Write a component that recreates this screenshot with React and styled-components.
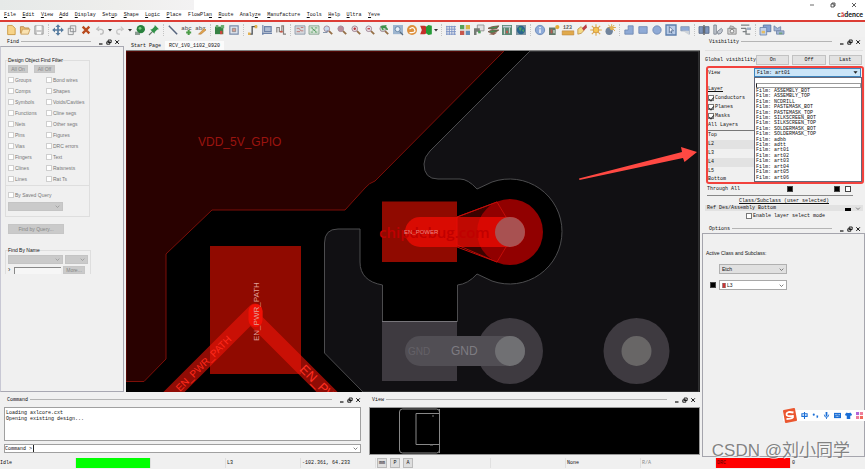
import React, { useState } from 'react';
import styled, { createGlobalStyle } from 'styled-components';

const GlobalStyle = createGlobalStyle`
    * {
        box-sizing: border-box;
    }

    body {
        margin: 0;
        background-color: #f0f0f0;
    }

    button, input, select, textarea {
        font: inherit;
        color: inherit;
        margin: 0;
        padding: 0;
    }
`;

const mono = '"Liberation Mono", monospace';
const sans = '"Liberation Sans", sans-serif';

const Page = styled.div`
    position: relative;
    display: flex;
    flex-direction: column;
    min-height: 100vh;
    background-color: #f0f0f0;
    color: #111;
    font-family: ${mono};
    font-size: 5px;
    line-height: 6px;
    overflow: hidden;
`;

/* ---------- header ---------- */

const Header = styled.header`
    display: grid;
    grid-template-columns: 1fr auto;
    grid-template-rows: 10px 10px;
    background-color: #fff;
    border-bottom: 2px solid #dc3d35;
`;

const TitleStrip = styled.div`
    width: 24%;
    background: linear-gradient(90deg, #e6e9e8, #eeeeec 60%, #f3f2f3);
`;

const WindowButtons = styled.div`
    display: flex;
    justify-content: flex-end;
    gap: 15px;
    padding-right: 8px;

    button {
        display: flex;
        align-items: center;
        border: none;
        background: none;
    }

    svg {
        width: 6px;
        height: 6px;
    }
`;

const Menu = styled.nav`
    display: flex;
    align-items: center;
    justify-content: space-between;
    width: 47%;
    padding-left: 4px;

    button {
        border: none;
        background: none;
    }

    u {
        text-decoration-thickness: 1px;
    }
`;

const Brand = styled.div`
    padding-right: 2px;
    font-family: Lato, sans-serif;
    font-size: 7px;
    font-weight: 700;
    line-height: 9px;
    text-align: right;

    span {
        color: #c33;
    }
`;

const Toolbar = styled.div`
    display: flex;
    align-items: center;
    height: 15px;
    padding-left: 2px;
    background-color: #f1f1f1;
`;

const ToolGroup = styled.div`
    display: flex;
    align-items: center;
    padding-left: 2px;

    & + & {
        margin-left: 2px;
        border-left: 1px dotted #c4c4c4;
    }
`;

const Tool = styled.button`
    display: flex;
    align-items: center;
    justify-content: center;
    width: ${props => (props.$narrow ? '6px' : '14px')};
    height: 12px;
    border: none;
    background: none;

    svg {
        width: ${props => (props.$narrow ? '4px' : '10px')};
        height: 10px;
        overflow: visible;
    }
`;

/* ---------- layout ---------- */

const Workspace = styled.main`
    display: grid;
    grid-template-columns: minmax(0, 1fr) 163px;
    column-gap: 2px;
    flex: 1;
`;

const Center = styled.div`
    display: flex;
    flex-direction: column;
`;

const UpperRow = styled.div`
    display: grid;
    grid-template-columns: 124px minmax(0, 1fr);
    column-gap: 2px;
    flex: 1;
`;

const LowerRow = styled.div`
    display: grid;
    grid-template-columns: 365fr 335fr;
    height: 65px;
`;

const Column = styled.section`
    display: flex;
    flex-direction: column;
    flex: ${props => (props.$grow ? '1' : 'none')};
    min-width: 0;
`;

const TitleBar = styled.div`
    display: flex;
    align-items: center;
    gap: 2px;
    height: ${props => (props.$tall ? '15px' : '9px')};
    padding: 0 4px 0 7px;

    h2 {
        margin: 0;
        font-size: 5px;
        font-weight: 400;
    }

    hr {
        flex: 1;
        height: 1px;
        margin: 0 5px 0 0;
        border: none;
        background-color: #b4b4b4;
    }

    button {
        display: flex;
        border: none;
        background: none;
    }

    svg {
        width: 6px;
        height: 6px;
    }
`;

const FindBody = styled.div`
    flex: 1;
    padding: 10px 0 0 4px;
    border: 1px solid #a8a8b2;
    border-left-color: #c8c8d4;
    font-family: ${sans};
    color: #777;
`;

const FilterBox = styled.fieldset`
    width: 85px;
    margin: 0;
    padding: ${props => (props.$open ? '0' : '0 0 5px')};
    border: 1px solid #dedede;
    border-bottom-width: ${props => (props.$open ? '0' : '1px')};

    legend {
        padding: 0;
        margin-left: 2px;
        color: #111;
    }
`;

const Row = styled.div`
    display: flex;
    align-items: center;
    gap: ${props => props.$gap || '2px'};
    padding: ${props => props.$pad || '0 2px'};
`;

const FlatButton = styled.button`
    height: ${props => (props.$large ? '10px' : '8px')};
    width: ${props => props.$width};
    border: 1px solid #c6c6c6;
    background-color: #cacaca;
    color: #858585;
    line-height: 6px;
`;

const FilterGrid = styled.div`
    display: grid;
    grid-template-columns: 38px 1fr;
    grid-auto-rows: 11px;
    align-items: center;
    padding-left: 2px;
`;

const CheckLabel = styled.label`
    display: flex;
    align-items: center;
    gap: 1px;
    white-space: nowrap;

    input {
        display: grid;
        place-items: center;
        appearance: none;
        width: 6px;
        height: 6px;
        border: 1px solid ${props => (props.$dark ? '#777' : '#cfcfcf')};
        background-color: #fff;
    }

    input:checked::after {
        content: '';
        width: 2px;
        height: 4px;
        border: solid #333;
        border-width: 0 1px 1px 0;
        transform: rotate(40deg);
    }
`;

const Divider = styled.hr`
    margin: ${props => props.$margin || '0'};
    border: none;
    border-top: 1px solid ${props => props.$color || '#dedede'};
`;

const Combo = styled.span`
    display: flex;
    align-items: center;
    width: ${props => props.$width};
    height: ${props => props.$height || '9px'};
    padding: 0 2px;
    border: 1px solid ${props => props.$border || '#c4c4c4'};
    background-color: ${props => props.$fill || '#cacaca'};

    select {
        appearance: none;
        flex: 1;
        min-width: 0;
        height: 6px;
        border: none;
        outline: none;
        background: none;
        line-height: 6px;
    }

    svg {
        flex: none;
        width: 5px;
        height: 5px;
    }
`;

const NameRow = styled.label`
    display: flex;
    align-items: center;
    gap: 2px;
    padding: 0 2px;
    color: #333;

    span {
        width: 4px;
        font-size: 7px;
    }

    input {
        width: 47px;
        height: 7px;
        border: 1px solid #888;
        border-width: 1px 0 0 1px;
        background-color: #f6f6f6;
    }
`;

const Tabs = styled.div`
    display: flex;
    align-items: flex-end;
    height: 14px;
    padding-left: 1px;
    border-bottom: 1px solid #808080;

    button {
        height: 9px;
        padding: 0 4px;
        border: none;
        background: none;
    }

    button[aria-selected='true'] {
        background-color: #fbfbfb;
    }
`;

const Board = styled.svg`
    display: block;
    flex: 1;
    width: 100%;
    min-height: 0;
    background-color: #000;
    font-family: ${sans};
`;

const CommandLog = styled.textarea`
    display: block;
    flex: 1;
    margin: 0 4px 3px;
    padding: 2px 1px;
    border: 1px solid #a0a0a0;
    background-color: #fff;
    resize: none;
    outline: none;
    line-height: 6px;
`;

const Prompt = styled.div`
    display: flex;
    align-items: center;
    height: 9px;
    margin: 0 4px 4px;
    padding-right: 2px;
    border: 1px solid #a0a0a0;
    background-color: #fff;

    input {
        flex: 1;
        height: 7px;
        margin-left: 1px;
        border: none;
        border-left: 1px solid #222;
        outline: none;
    }

    svg {
        width: 5px;
        height: 5px;
    }
`;

const Overview = styled.div`
    flex: 1;
    display: flex;
    margin: 0 0 2px 4px;
    border: 1px solid #999;
    background-color: #000;

    svg {
        width: 84px;
        height: 46px;
    }
`;

/* ---------- visibility ---------- */

const VisibilityBody = styled.div`
    display: flex;
    flex-direction: column;
    padding: 4px 2px 3px 3px;
`;

const GlobalRow = styled.div`
    display: grid;
    grid-template-columns: 48px repeat(3, 1fr);
    column-gap: 3px;
    align-items: center;
    height: 10px;
    margin-right: 1px;
    white-space: nowrap;

    button {
        height: 10px;
        border: 1px solid #c2c2c2;
        background-color: #e2e2e2;
    }
`;

const Highlight = styled.div`
    display: flex;
    flex-direction: column;
    height: 118px;
    margin: 1px -1px 0 1px;
    border: 2px solid #f2423d;
    border-radius: 3px;
`;

const ViewRow = styled.div`
    position: relative;
    display: grid;
    grid-template-columns: 46px 1fr;
    align-items: center;
    padding: 0 1px 0 0;
`;

const FilmList = styled.ul`
    position: absolute;
    top: 9px;
    left: 46px;
    right: 0;
    display: flex;
    flex-direction: column;
    height: 105px;
    margin: 0;
    padding: 0 0 0 1px;
    border: 1px solid #667;
    background-color: #fff;
    list-style: none;

    li {
        flex: 1;
        line-height: 5px;
        white-space: pre;
    }

    li:first-child {
        flex: none;
        height: 5px;
    }

    li:nth-child(2) {
        flex: none;
        height: 5px;
        margin-bottom: 1px;
        border: 1px solid #999;
        border-left-color: #222;
    }
`;

const LayerFilters = styled.div`
    display: flex;
    flex-direction: column;
    gap: 3px;
    padding-top: 9px;

    label {
        height: 6px;
    }
`;

const LayerTable = styled.table`
    width: 100%;
    margin-top: 2px;
    border-collapse: collapse;
    border-top: 1px solid #777;

    th {
        height: 9px;
        padding: 0;
        font-weight: 400;
        text-align: left;
    }

    tr:nth-child(even) {
        background-color: #e2e2e2;
    }
`;

const BottomLayers = styled.div`
    display: grid;
    grid-template-columns: ${props => (props.$inset ? '81px' : '80px')} repeat(3, 12px) 11px 11px 6px;
    align-items: center;
    height: ${props => props.$height};
    padding-left: ${props => (props.$inset ? '0' : '2px')};
`;

const Swatch = styled.input`
    appearance: none;
    width: 6px;
    height: ${props => (props.$short ? '3px' : '6px')};
    align-self: ${props => (props.$short ? 'end' : 'center')};
    border: 1px solid #444;
    background-color: ${props => props.$fill || '#000'};
`;

const ClassTitle = styled.div`
    text-align: center;
    text-decoration: underline;
    line-height: 8px;
`;

const ClippedRow = styled.div`
    display: flex;
    align-items: center;
    gap: 4px;
    height: 6px;
    padding: 0 2px;
    background-color: #e2e2e2;

    span {
        flex: 1;
    }

    svg {
        width: 6px;
        height: 5px;
    }
`;

const OptionsBody = styled.div`
    flex: 1;
    padding: 16px 3px;
    border: 1px solid #a5a5ad;
    font-family: ${sans};
`;

const OptionRow = styled.div`
    display: grid;
    grid-template-columns: 7px 68px;
    align-items: center;
    column-gap: 2px;
    margin-top: ${props => props.$top};
    padding-left: 4px;

    ${Combo} {
        grid-column: 2;
    }
`;

/* ---------- status bar and overlays ---------- */

const StatusBar = styled.footer`
    display: grid;
    grid-template-columns: 75fr 75fr 75fr 75fr 75fr 115fr 75fr 75fr 75fr 75fr 75fr;
    height: 12px;
    padding: 1px 0;
`;

const Cell = styled.div`
    display: flex;
    align-items: center;
    gap: 3px;
    padding-left: 1px;
    border-left: 1px solid #e0e0e0;
    background-color: ${props => props.$fill || 'transparent'};
    color: ${props => props.$color || '#111'};

    &:first-child {
        padding-left: 0;
        border-left: none;
    }

    button {
        width: 10px;
        height: 10px;
        border: 1px solid #bbb;
        background-color: #dedede;
    }
`;

const Ime = styled.div`
    position: absolute;
    right: 0;
    bottom: 48px;
    display: flex;
    align-items: center;
    gap: 4px;
    height: 11px;
    padding-right: 2px;
    background-color: #fff;

    svg {
        width: 7px;
        height: 7px;
    }

    svg:first-child {
        width: 15px;
        height: 15px;
        margin-left: -1px;
    }
`;

const Watermark = styled.div`
    position: absolute;
    right: 15px;
    bottom: 7px;
    color: rgba(110, 110, 110, 0.85);
    font-family: "Liberation Sans", "Noto Sans CJK SC", sans-serif;
    font-size: 17px;
    line-height: 22px;
    text-shadow: 1px 1px 0 rgba(255, 255, 255, 0.6);
    white-space: nowrap;
`;

/* ---------- small drawings ---------- */

const Chevron = ({ color = '#666' }) => (
    <svg viewBox="0 0 6 6"><path d="M.8 2 3 4.2 5.2 2" fill="none" stroke={color} /></svg>
);

const Caret = () => (
    <svg viewBox="0 0 4 10"><path d="M0 4h4L2 6.4z" fill="#333" /></svg>
);

const magnifier = (lens, mark) => (
    <>
        <path d="M7 7l4 4" stroke="#967047" strokeWidth="2.2" />
        <circle cx="4.5" cy="4.5" r="3.4" fill={lens} stroke="#a58d9c" strokeWidth="1.2" />
        {mark}
    </>
);

const icons = {
    new: <path d="M2 .5h5.5L11 4v7.5H2z" fill="#f7d388" stroke="#c59137" />,
    open: <><path d="M.5 10V2h4l1 1.5h5V5" fill="#e9bd71" stroke="#bb8744" /><path d="M1 11l2-6h9l-2 6z" fill="#fae2b1" stroke="#c59a58" /></>,
    save: <><path d="M1 1h10v10H1z" fill="#ccc" stroke="#929292" /><path d="M3 1h6v5H3zM3.5 8.5h5V11h-5z" fill="#f8f8f8" /></>,
    move: <><path d="M6 1v10M1 6h10" stroke="#557b9f" strokeWidth="2" /><path d="M6-1l3 3.4H3zM6 13l3-3.4H3zM-1 6l3.4-3v6zM13 6L9.6 3v6z" fill="#557b9f" /></>,
    copy: <path d="M4 1h6.5v7H4zM1.5 4h6v7.5h-6z" fill="#eee" stroke="#85888c" />,
    remove: <path d="M2 2l8 8M10 2l-8 8" stroke="#b94b1f" strokeWidth="2.8" />,
    undo: <><path d="M5 2L2 5l3 2" fill="none" stroke="#bdbdbd" strokeWidth="1.4" /><path d="M3 5h2q5 0 5 3t-4 3" fill="none" stroke="#bdbdbd" strokeWidth="1.6" /></>,
    redo: <><path d="M7 2l3 3-3 2" fill="none" stroke="#c8c8c8" strokeWidth="1.4" /><path d="M9 5H7Q2 5 2 8t4 3" fill="none" stroke="#c8c8c8" strokeWidth="1.6" /></>,
    ball: <><path d="M0 8h6v4H0z" fill="#8a9a91" /><circle cx="7" cy="5" r="5" fill="#29813d" /><circle cx="6" cy="4" r="1.7" fill="#7ccc83" /></>,
    pin: <><path d="M0 12l5-5" stroke="#68786c" strokeWidth="1.4" /><path d="M7 0l5 5-2 .5-3 3-.5 2L1.5 5.5l2-.5 3-3z" fill="#329249" /></>,
    line: <path d="M1 1l10 10" stroke="#56647d" strokeWidth="1.8" />,
    text: <><text x="-1" y="6" fontSize="7" fill="#444">abc</text><path d="M8 6v6M5 9h6" stroke="#4b9c47" strokeWidth="2.4" /></>,
    textEdit: <><text x="-1" y="6" fontSize="7" fill="#444">abc</text><path d="M3 11l7-7 2 2-6 5z" fill="#e2a44d" stroke="#a66e30" strokeWidth=".6" /></>,
    place: <><path d="M0 2h10v9H0z" fill="#378245" /><path d="M7 0h4v4H7zM1 0h3v3H1z" fill="#69ad70" /><path d="M6 7h3v4H6z" fill="#c9463c" /></>,
    chip: <><path d="M1 1h10v10H1z" fill="#dfe5ee" stroke="#7a8ca9" strokeWidth="1.4" /><path d="M4 4h4v4H4z" fill="#dd9f91" stroke="#888" /></>,
    route: <><path d="M1 11h4V2h6" fill="none" stroke="#4e5358" strokeWidth="1.6" /><path d="M8 0h3v4H8zM0 9h3v3H0z" fill="#e2b04e" /></>,
    slide: <><path d="M1 0v12M0 10h12M3 2h8v6H3z" fill="#afbdd2" stroke="#6f84a9" strokeWidth="1.4" /></>,
    delay: <><path d="M1 9V3h3v5h3V1h2v10h3" fill="none" stroke="#85807d" strokeWidth="1.4" /><path d="M5 8h3" stroke="#cc5747" strokeWidth="2" /></>,
    grid1: <><path d="M0 1h12v10H0z" fill="#d4d8dd" stroke="#8896a6" /><path d="M2 4h3l2 3h3M2 8h4M7 3h3" fill="none" stroke="#bb6c66" /></>,
    grid2: <><path d="M0 1h12v10H0z" fill="#dce7dc" stroke="#7d9a87" /><path d="M2 3.500h3M7 3.500h3M4 6h4M2 8.500h3M7 8.500h3M4 4l4 4" stroke="#499557" /></>,
    zoomFit: magnifier('#c6d8ed', <path d="M0 9h5V6" fill="none" stroke="#7387a0" />),
    zoomWin: magnifier('#b98e9b', null),
    zoomIn: magnifier('#ecd7dc', <path d="M4.5 3v3M3 4.5h3" stroke="#b42d35" strokeWidth="1.4" />),
    zoomOut: magnifier('#ebdfe4', <path d="M3 4.5h3" stroke="#b42d35" strokeWidth="1.4" />),
    zoomPrev: magnifier('#c9d7c9', <path d="M9 1L3 2l2 4M4 3q5-1 6 3" fill="none" stroke="#3d9149" strokeWidth="1.8" />),
    zoomSel: <><path d="M0 0h12v11H0z" fill="#9db5cf" /><circle cx="5.5" cy="5" r="3" fill="#e4edf6" stroke="#5a7da0" /><path d="M8 8l4 4" stroke="#5a6d80" strokeWidth="1.5" /></>,
    refresh: <><circle cx="6" cy="6" r="6" fill="#dd903d" /><path d="M3 5q4-4 6 0t-3 4M6 9H3" fill="none" stroke="#fff" strokeWidth="1.5" /></>,
    flip: <><path d="M-1 1h5q3 0 3 5t-3 5h-5l2-5z" fill="#c5302b" /><path d="M6 2l3-2 4 1v10l-4 1-3-2z" fill="#259a37" /></>,
    grid: <path d="M0 2h12M0 5h12M0 8h12M0 11h12M1 1v11M4 1v11M7 1v11M10 1v11" stroke="#7891c4" strokeWidth="1.1" />,
    colors: <><path d="M0 0h12v12H0z" fill="#ddd" /><path d="M0 0h5v5H0z" fill="#55a15a" /><path d="M7 0h5v5H7z" fill="#d8b644" /><path d="M0 7h5v5H0z" fill="#c7574c" /><path d="M7 7h5v5H7z" fill="#628db9" /></>,
    shadow: <><path d="M4 0h8v7H4z" fill="#e0e0e0" stroke="#8c8c8c" /><path d="M0 4h7v4H3v4H0z" fill="#767c76" /><path d="M5 7h3v3H5z" fill="#4b9d56" /></>,
    layers: <><path d="M0 4l5-2 8-1-2 3-6 1zM0 8l5-2 8 0-3 2-5 2z" fill="#4a8b55" stroke="#774b3f" /><path d="M1 11l5-2 5 0-4 3z" fill="#8d6252" /></>,
    board: <><path d="M0 0h12v12H0z" fill="#5d8a77" /><path d="M1 1h10v2H1z" fill="#c3d0db" /><path d="M3 4v7M9 3v7" stroke="#c9d0c6" strokeWidth="1.3" /><path d="M5 7h2v3H5z" fill="#cc5247" /></>,
    world: <><path d="M0 0h12v12H0z" fill="#8195a2" /><circle cx="6" cy="6" r="5" fill="#2b668f" /><path d="M3 3h4l-2 5zM7 6l3-1-1 4z" fill="#4da464" /></>,
    info: <><circle cx="6" cy="6" r="5.6" fill="#8eabd9" stroke="#6885b5" /><path d="M6 5v4.5M6 2.3V4" stroke="#fff" strokeWidth="1.6" /></>,
    key: <><path d="M0 3h8v9H0z" fill="#627869" /><path d="M2 5h2v5H2z" fill="#ba5b50" /><path d="M5 6h2v4H5z" fill="#b5c8b8" /><circle cx="10" cy="2.5" r="2.5" fill="#e3aa35" /></>,
    ruler: <><text x="0" y="5" fontSize="6" fontWeight="700" fill="#555">123</text><path d="M-1 7h14v5H-1z" fill="#e0a94c" stroke="#b67c33" strokeWidth=".6" /></>,
    brush: <><path d="M1 5l4-3 4 4-4 4-4 1z" fill="#f4d986" stroke="#bd9348" /><path d="M6 4l5-5 1 4-4 4z" fill="#bb3e45" /></>,
    sun: <><path d="M6-1v14M-1 6h14M1 1l10 10M11 1L1 11" stroke="#dca849" strokeWidth="1.3" /><circle cx="6" cy="6" r="3.4" fill="#f5c553" stroke="#cf913e" /></>,
    shade: <><path d="M8-1v9M3 3h10M4 0l8 7M11 0L5 7" stroke="#dca849" strokeWidth="1.2" /><circle cx="5" cy="7.5" r="4.4" fill="#71849c" /><circle cx="8" cy="4" r="2.2" fill="#e5b452" /></>,
    poly: <path d="M5 1h6v10H1V6h4z" fill="#8faad6" stroke="#6e87b1" />,
    rect: <path d="M1 2h10v8H1z" fill="#8faad6" stroke="#6e87b1" />,
    circle: <circle cx="6" cy="6" r="5" fill="#8faad6" stroke="#6e87b1" />,
    select: <><path d="M0 0h12v12H0z" fill="#b8cbe7" stroke="#5c7eac" strokeWidth="1.6" /><path d="M4 2l5 5H6l1 3-2-2-1 1z" fill="#f9faff" stroke="#344f76" strokeWidth=".8" /></>,
    cut: <><path d="M1 2h10v9L7 7H1z" fill="#8faad6" stroke="#8395b1" /><path d="M3 7l8 5V7z" fill="#cfd4da" /></>,
    mirror: <><path d="M0 2h5v8H0zM7 2h5v8H7z" fill="#7e95bb" stroke="#546685" /><path d="M6 0v12" stroke="#444" strokeWidth="1.4" /></>,
    probe: <path d="M1 0h3v11H1zM5 8l5-4q2 1 1 4T6 11z" fill="#c2c7d0" stroke="#777f8c" />,
    camera: <><path d="M1 4h10v7H1zM4 1l4 1 1 2H3z" fill="#d2d2d2" stroke="#888" /><circle cx="6" cy="7.4" r="2.2" fill="#f0f0f0" stroke="#777" /></>,
    net: <><path d="M0 0h10M0 4h6M2 8h5M6 4v7h5" fill="none" stroke="#7c8183" strokeWidth="1.5" /><path d="M7 3h5v3H7z" fill="#a1b1c6" /></>,
    stack: <><path d="M4 0h9v8H4z" fill="#84a0d2" stroke="#59739f" /><path d="M0 3h8v9H0z" fill="#c2d1e9" stroke="#6b84ad" /><path d="M2 7h4v3H2z" fill="#e5bd63" /></>,
    clip: <><path d="M0 1l4 3 4-2v5H0z" fill="#a2b6d5" stroke="#7186aa" /><path d="M3 7h9v4H3z" fill="#a2b6d5" stroke="#7186aa" /><path d="M6 9h4v2H6z" fill="#72a37a" /></>,
};

const toolGroups = [
    ['new', 'open', 'save'],
    ['move', 'copy', 'remove', 'undo', 'caret', 'redo', 'caret', 'ball', 'pin'],
    ['line', 'text', 'textEdit'],
    ['place', 'chip'],
    ['route', 'slide', 'delay'],
    ['grid1', 'grid2', 'zoomFit', 'zoomWin', 'zoomIn', 'zoomOut', 'zoomPrev', 'zoomSel', 'refresh', 'flip', 'caret'],
    ['grid', 'colors', 'shadow', 'layers', 'board', 'world'],
    ['info', 'key', 'ruler', 'brush', 'sun', 'shade'],
    ['poly', 'rect', 'circle', 'select', 'cut'],
    ['mirror', 'probe', 'camera', 'net'],
    ['stack', 'clip'],
];

// [label, index of the underlined letter]
const menus = [
    ['File', 0], ['Edit', 0], ['View', 0], ['Add', 0], ['Display', 0], ['Setup', 3],
    ['Shape', 0], ['Logic', 0], ['Place', 0], ['FlowPlan', 7], ['Route', 0], ['Analyze', 5],
    ['Manufacture', 0], ['Tools', 0], ['Help', 0], ['Ultra', 0], ['Yeve', 0],
];

const filters = [
    'Groups', 'Bond wires', 'Comps', 'Shapes', 'Symbols', 'Voids/Cavities', 'Functions', 'Cline segs',
    'Nets', 'Other segs', 'Pins', 'Figures', 'Vias', 'DRC errors', 'Fingers', 'Text',
    'Clines', 'Ratsnests', 'Lines', 'Rat Ts',
];

const films = [
    'ASSEMBLY_BOT', 'ASSEMBLY_TOP', 'NCDRILL', 'PASTEMASK_BOT', 'PASTEMASK_TOP', 'SILKSCREEN_BOT',
    'SILKSCREEN_TOP', 'SOLDERMASK_BOT', 'SOLDERMASK_TOP', 'adbb', 'adtt', 'art01', 'art02', 'art03',
    'art04', 'art05', 'art06',
];

function PanelTitle({ title, tall }) {
    return (
        <TitleBar $tall={tall}>
            <h2>{title}</h2>
            <hr />
            <button aria-label="Minimize"><svg viewBox="0 0 6 6"><path d="M1 5h3.5" stroke="#111" strokeWidth="1.2" /></svg></button>
            <button aria-label="Float"><svg viewBox="0 0 6 6"><path d="M2.2 1h3v2.5h-3zM.8 2.8h3v2.4h-3z" fill="#eee" stroke="#111" strokeWidth=".9" /></svg></button>
            <button aria-label="Close"><svg viewBox="0 0 6 6"><path d="M1.3 1.3l3.6 3.6M4.9 1.3L1.3 4.9" stroke="#111" /></svg></button>
        </TitleBar>
    );
}

function FindPanel() {
    return (
        <Column>
            <PanelTitle title="Find" />
            <FindBody>
                <FilterBox>
                    <legend>Design Object Find Filter</legend>
                    <Row $gap="6px" $pad="2px 2px 1px">
                        <FlatButton $width="20px">All On</FlatButton>
                        <FlatButton $width="21px">All Off</FlatButton>
                    </Row>
                    <FilterGrid>
                        {filters.map(name => (
                            <CheckLabel key={name}><input type="checkbox" />{name}</CheckLabel>
                        ))}
                    </FilterGrid>
                    <Divider $margin="1px 0 6px" />
                    <Row><CheckLabel><input type="checkbox" />By Saved Query</CheckLabel></Row>
                    <Row $pad="4px 2px 0">
                        <Combo $width="55px"><select aria-label="Saved query" /><Chevron color="#999" /></Combo>
                    </Row>
                </FilterBox>
                <Row $pad="7px 3px 13px"><FlatButton $large $width="56px">Find by Query...</FlatButton></Row>
                <FilterBox $open>
                    <legend>Find By Name</legend>
                    <Row $pad="2px 2px">
                        <Combo $width="55px"><select aria-label="Name type" /><Chevron color="#999" /></Combo>
                        <Combo $width="23px"><select aria-label="Name list" /><Chevron color="#999" /></Combo>
                    </Row>
                    <NameRow>
                        <span>›</span>
                        <input aria-label="Name" />
                        <FlatButton $width="22px">More...</FlatButton>
                    </NameRow>
                </FilterBox>
            </FindBody>
        </Column>
    );
}

function BoardView() {
    return (
        <Board viewBox="126 51 574 341" preserveAspectRatio="xMidYMid slice">
            <path d="M126 51H504L375 181Q369 183 365 188L345 210H212L166 254V359L144 381.500H126z" fill="#290100" stroke="#7c0f08" />
            <path
                d="M530 51L430 151Q424 157 424 164 424 179 438 179H460Q468 179 477 189L492 182A52.500 52.500 0 1 1 492 281L477 274Q468 284 457.500 285V321.500H382.500V285Q360 281 360 262V229H338Q324.500 229 324.500 243V353L363 392H699V51z"
                fill="#111013"
                stroke="#4c4c4e"
            />
            <text x="198" y="146" fontSize="12" fill="#9b140f">VDD_5V_GPIO</text>

            <path d="M210 246h91v128h-91z" fill="#900a00" />
            <g stroke="#f01408" strokeWidth="15" strokeLinecap="round" strokeLinejoin="round" fill="none" opacity=".6">
                <path d="M165 401L255 311V320L336 401" />
            </g>
            <path d="M255.500 311v9" stroke="#f01005" strokeWidth="14" strokeLinecap="round" />
            <text transform="translate(259 341) rotate(-90)" fontSize="8" fill="#e0a09a">EN_PWR_PATH</text>
            <text transform="translate(180 392) rotate(-45)" fontSize="10" fill="#ff2a1c">EN_PWR_PATH</text>
            <text transform="translate(299 370) rotate(45)" fontSize="13" fill="#ff3022">EN_PWR_PATH</text>

            <path d="M382 201.500h75v60.500h-75z" fill="#900a00" />
            <path d="M457 217l40-15 10 17v26l-10 17-40-17z" fill="#3a0300" stroke="#b30d08" />
            <circle cx="510" cy="232" r="33" fill="#910000" />
            <path d="M457 217l40-15 12 20M457 247l40 15 12-20" fill="none" stroke="#c40c08" />
            <path d="M420 232H510" stroke="#f80c04" strokeWidth="30" strokeLinecap="round" opacity=".7" />
            <circle cx="510" cy="232" r="15" fill="#a85151" />
            <text x="379" y="238" fontFamily="Open Sans, sans-serif" fontSize="15" fontWeight="600" fill="#c00000">chipdebug.com</text>
            <text x="404" y="234" fontSize="6" fill="#ed8a80">EN_POWER</text>

            <path d="M382 321.500h75V381h-75z" fill="#3e3a40" />
            <path d="M382 321.500h75" stroke="#77757a" />
            <circle cx="510" cy="351" r="33" fill="#3e3a40" />
            <path d="M420 351H510" stroke="#514e54" strokeWidth="30" strokeLinecap="round" />
            <circle cx="510" cy="351" r="15" fill="#707073" />
            <circle cx="636.500" cy="351" r="33" fill="#3e3a40" />
            <circle cx="636.500" cy="351" r="15" fill="#686666" />
            <text x="408" y="355" fontSize="10" fill="#646167">GND</text>
            <text x="451" y="355" fontSize="12" fill="#7e7c82">GND</text>

            <path d="M579 178.500L682 152 681 147 697 152 684.500 162 683 158 579.500 180z" fill="#ff4943" />
        </Board>
    );
}

function VisibilityPanel() {
    return (
        <Column as="div">
            <PanelTitle title="Visibility" />
            <VisibilityBody>
                <Divider $margin="0 0 4px" $color="#e2e2e2" />
                <GlobalRow>
                    <span>Global visibility</span>
                    <button>On</button>
                    <button>Off</button>
                    <button>Last</button>
                </GlobalRow>
                <Highlight>
                    <ViewRow>
                        <label htmlFor="view">View</label>
                        <Combo $border="#3c84bd" $fill="#cbe5f8">
                            <select id="view" defaultValue="art01"><option value="art01">Film: art01</option></select>
                            <svg viewBox="0 0 6 6"><path d="M.5 1.500h5L3 4.500z" fill="#222" /></svg>
                        </Combo>
                        <FilmList role="listbox">
                            <li />
                            <li />
                            {films.map(film => <li key={film} role="option">Film: {film}</li>)}
                        </FilmList>
                    </ViewRow>
                    <LayerFilters>
                        <u>Layer</u>
                        <CheckLabel $dark><input type="checkbox" defaultChecked />Conductors</CheckLabel>
                        <CheckLabel $dark><input type="checkbox" defaultChecked />Planes</CheckLabel>
                        <CheckLabel $dark><input type="checkbox" defaultChecked />Masks</CheckLabel>
                        <span>All Layers</span>
                    </LayerFilters>
                    <LayerTable>
                        <tbody>
                            {['Top', 'L2', 'L3', 'L4', 'L5'].map(name => (
                                <tr key={name}><th scope="row">{name}</th></tr>
                            ))}
                        </tbody>
                    </LayerTable>
                    <BottomLayers $inset $height="7px">
                        <span>Bottom</span>
                        {[1, 2, 3, 4, 5].map(n => <Swatch key={n} $short type="checkbox" aria-label={`Bottom ${n}`} />)}
                        <Swatch $short $fill="#fff" type="checkbox" aria-label="Bottom 6" />
                    </BottomLayers>
                </Highlight>
                <BottomLayers $height="10px">
                    <span>Through All</span>
                    <Swatch type="checkbox" aria-label="Through all, pins" />
                    <span /><span /><span />
                    <Swatch type="checkbox" aria-label="Through all, vias" />
                    <Swatch $fill="#fff" type="checkbox" aria-label="Through all, all" />
                </BottomLayers>
                <Divider $margin="1px 10px 1px 2px" $color="#888" />
                <ClassTitle>Class/Subclass (user selected)</ClassTitle>
                <ClippedRow>
                    <span>Ref Des/Assembly Bottom</span>
                    <svg viewBox="0 0 6 5"><path d="M0 2h6v3H0z" /></svg>
                    <Chevron />
                </ClippedRow>
                <Row $pad="2px 0 2px 41px">
                    <CheckLabel $dark><input type="checkbox" />Enable layer select mode</CheckLabel>
                </Row>
            </VisibilityBody>
        </Column>
    );
}

function OptionsPanel() {
    return (
        <Column $grow>
            <PanelTitle title="Options" />
            <OptionsBody>
                <div>Active Class and Subclass:</div>
                <OptionRow $top="8px">
                    <Combo $height="10px" $border="#b0b0b0" $fill="#e0e0e0">
                        <select aria-label="Class"><option>Etch</option></select>
                        <Chevron />
                    </Combo>
                </OptionRow>
                <OptionRow $top="6px">
                    <Swatch type="checkbox" aria-label="Subclass visible" />
                    <Combo $height="10px" $border="#a8a8a8" $fill="#fff">
                        <svg viewBox="0 0 5 5"><path d="M.5 0h3v5h-3z" fill="#c33" stroke="#777" strokeWidth=".6" /></svg>
                        <select aria-label="Subclass"><option>L3</option></select>
                        <Chevron />
                    </Combo>
                </OptionRow>
            </OptionsBody>
        </Column>
    );
}

function ImeBar() {
    return (
        <Ime>
            <svg viewBox="0 0 15 15">
                <path d="M2 3l10-2 2 11-10 2z" fill="#ea5730" stroke="#ea5730" strokeWidth="2" strokeLinejoin="round" />
                <path d="M11.500 4.500Q5 3 4.500 6T11 8Q12 11 4.500 11" fill="none" stroke="#fff" strokeWidth="1.800" />
            </svg>
            <svg viewBox="0 0 8 8"><path d="M1 2h6v3H1zM4 0v8" fill="none" stroke="#1b6fd6" strokeWidth="1.200" /></svg>
            <svg viewBox="0 0 8 8"><circle cx="2" cy="3" r="1.200" fill="#1b6fd6" /><path d="M5 4h2v2L5.500 7z" fill="#1b6fd6" /></svg>
            <svg viewBox="0 0 8 8"><path d="M3 0h2v5H3z" fill="#1b6fd6" /><path d="M1.500 3q0 3 2.500 3t2.500-3M4 6v2" fill="none" stroke="#1b6fd6" /></svg>
            <svg viewBox="0 0 8 8"><path d="M0 1h8v6H0z" fill="#1b6fd6" /><path d="M1 3h6M2 5h4" stroke="#fff" strokeDasharray="1 .6" strokeWidth=".8" /></svg>
            <svg viewBox="0 0 8 8"><path d="M2 .5q2 1.500 4 0l2 2-1 2-1-.5v4H2V4l-1 .5-1-2z" fill="#1b6fd6" /></svg>
            <svg viewBox="0 0 8 8"><path d="M0 0h3.500v3.500H0z" fill="#b163d8" /><path d="M4.500 0H8v3.500H4.500zM0 4.500h3.500V8H0z" fill="#ee7d9a" /><path d="M4.500 4.500H8V8H4.500z" fill="#f16a5b" /></svg>
        </Ime>
    );
}

export default function App() {
    const [command, setCommand] = useState('');

    return (
        <Page>
            <GlobalStyle />
            <Header>
                <TitleStrip />
                <WindowButtons>
                    <button aria-label="Minimize"><svg viewBox="0 0 6 6"><path d="M1 3h4" stroke="#444" strokeWidth=".8" /></svg></button>
                    <button aria-label="Restore"><svg viewBox="0 0 6 6"><path d="M1 2h3v3H1zM2 2V1h3v3H4" fill="none" stroke="#333" strokeWidth=".8" /></svg></button>
                    <button aria-label="Close"><svg viewBox="0 0 6 6"><path d="M1 1l4 4M5 1L1 5" stroke="#333" strokeWidth=".8" /></svg></button>
                </WindowButtons>
                <Menu>
                    {menus.map(([label, key]) => (
                        <button key={label}>{label.slice(0, key)}<u>{label[key]}</u>{label.slice(key + 1)}</button>
                    ))}
                </Menu>
                <Brand>c<span>ā</span>dence</Brand>
            </Header>
            <Toolbar>
                {toolGroups.map(group => (
                    <ToolGroup key={group[0]}>
                        {group.map((name, i) => (
                            <Tool key={i} $narrow={name === 'caret'} aria-label={name}>
                                {name === 'caret' ? <Caret /> : <svg viewBox="0 0 12 12" fill="none">{icons[name]}</svg>}
                            </Tool>
                        ))}
                    </ToolGroup>
                ))}
            </Toolbar>
            <Workspace>
                <Center>
                    <UpperRow>
                        <FindPanel />
                        <Column>
                            <Tabs role="tablist">
                                <button role="tab" aria-selected="false">Start Page</button>
                                <button role="tab" aria-selected="true">RCV_1V0_1102_0920</button>
                            </Tabs>
                            <BoardView />
                        </Column>
                    </UpperRow>
                    <LowerRow>
                        <Column>
                            <PanelTitle tall title="Command" />
                            <CommandLog aria-label="Command log" readOnly value={'Loading axlcore.cxt\nOpening existing design...'} />
                            <Prompt>
                                <label htmlFor="command">Command &gt;</label>
                                <input id="command" value={command} onChange={e => setCommand(e.target.value)} />
                                <Chevron />
                            </Prompt>
                        </Column>
                        <Column>
                            <PanelTitle tall title="View" />
                            <Overview>
                                <svg viewBox="0 0 84 46">
                                    <rect x="29.500" y="1" width="40" height="44" rx="3" fill="none" stroke="#888" />
                                    <path d="M70 5.500H46v31h24M69.500 1v44" fill="none" stroke="#888" />
                                    <path d="M62 8h2M60 37h3" stroke="#777" />
                                </svg>
                            </Overview>
                        </Column>
                    </LowerRow>
                </Center>
                <Column>
                    <VisibilityPanel />
                    <OptionsPanel />
                </Column>
            </Workspace>
            <StatusBar>
                <Cell>Idle</Cell>
                <Cell $fill="#00ff00" />
                <Cell />
                <Cell>L3</Cell>
                <Cell>-102.361, 64.233</Cell>
                <Cell>
                    <button>mm</button>
                    <button>P</button>
                    <button>A</button>
                </Cell>
                <Cell />
                <Cell>None</Cell>
                <Cell $color="#888">R/A</Cell>
                <Cell $fill="#ff0000" $color="#500">DRC</Cell>
                <Cell>0</Cell>
            </StatusBar>
            <ImeBar />
            <Watermark>CSDN @刘小同学</Watermark>
        </Page>
    );
}
